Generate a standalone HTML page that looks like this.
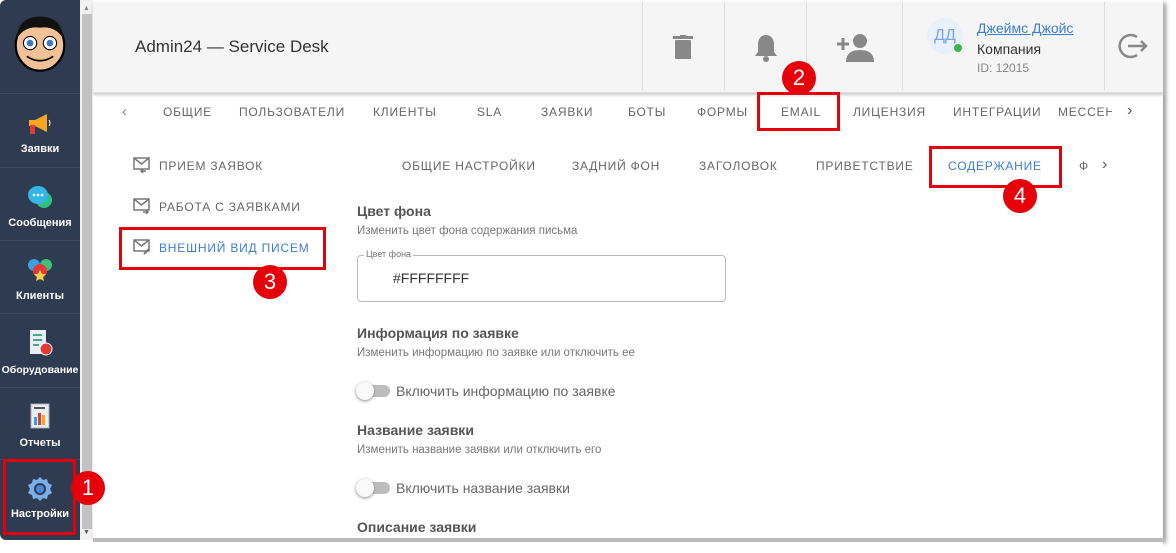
<!DOCTYPE html>
<html><head><meta charset="utf-8"><style>
*{box-sizing:border-box;margin:0;padding:0}
body{width:1176px;height:553px;background:#fff;font-family:"Liberation Sans",sans-serif;position:relative;overflow:hidden}
.abs{position:absolute}
#side{left:0;top:0;width:80px;height:540px;background:#2e3b51;border-radius:6px 0 0 6px}
.nav{position:absolute;left:0;width:80px;color:#fff;font-size:11px;font-weight:bold;text-align:center;border-top:1px solid #3d4a60}
.nav .ic{margin:0 auto;width:26px;height:26px}
#sb{left:80px;top:0;width:13px;height:540px;background:#f1f1f1}
#sbt{left:82px;top:14px;width:10px;height:515px;background:#c2c2c2}
#main{left:93px;top:0;width:1070px;height:540px;background:#fff;box-shadow:3px 3px 4px #999}
#hdr{left:93px;top:2px;width:1070px;height:91px;background:#f5f5f5;border-bottom:1px solid #ddd;box-shadow:0 2px 3px #ccc}
.tab{position:absolute;font-size:12px;letter-spacing:0.8px;color:#666;font-weight:500;white-space:nowrap}
.blue{color:#3b7ed1}
.red{position:absolute;border:3px solid #e5000a}
.badge{position:absolute;width:34px;height:34px;border-radius:50%;background:#e5000a;color:#fff;font-size:22px;text-align:center;line-height:34px}
.vs{position:absolute;top:2px;width:1px;height:88px;background:#ddd}
.h{position:absolute;left:357px;font-size:14px;font-weight:bold;color:#555}
.s{position:absolute;left:357px;font-size:11.5px;color:#777}
.tog{position:absolute;left:358px;width:32px;height:12px;border-radius:6px;background:#bdbdbd}
.tog:before{content:"";position:absolute;left:-2px;top:-3px;width:18px;height:18px;border-radius:50%;background:#fafafa;box-shadow:0 1px 3px #888}
.tl{position:absolute;left:396px;font-size:14px;color:#666}
</style></head><body>
<div id="side" class="abs">
 <div class="abs" style="left:10px;top:10px;width:60px;height:64px">
  <svg width="60" height="64" viewBox="0 0 52 58"><ellipse cx="26" cy="32" rx="22" ry="23" fill="#f2c196" stroke="#000" stroke-width="2"/><path d="M5 26 Q6 6 26 6 Q46 6 47 26 Q40 14 26 16 Q12 14 5 26Z" fill="#111"/><circle cx="17" cy="30" r="6" fill="#fff" stroke="#000"/><circle cx="35" cy="30" r="6" fill="#fff" stroke="#000"/><circle cx="17" cy="30" r="3" fill="#3a78c9"/><circle cx="35" cy="30" r="3" fill="#3a78c9"/><path d="M14 42 Q26 50 38 42" fill="none" stroke="#000" stroke-width="1.5"/></svg>
 </div>
 <div class="nav" style="top:93px;height:74px;padding-top:17px"><div class="ic"><svg width="26" height="26"><path d="M2 9h6l12-6v18l-12-6H2z" fill="#f6a623"/><rect x="3" y="14" width="5" height="9" fill="#e53935"/><path d="M22 9q2 3 0 6" stroke="#fff" fill="none"/></svg></div><div style="margin-top:6px">Заявки</div></div>
 <div class="nav" style="top:167px;height:73px;padding-top:16px"><div class="ic"><svg width="26" height="26"><circle cx="17" cy="16" r="8" fill="#2ec27e"/><ellipse cx="11" cy="11" rx="10" ry="9" fill="#34b6e8"/><circle cx="7" cy="11" r="1.3" fill="#fff"/><circle cx="11" cy="11" r="1.3" fill="#fff"/><circle cx="15" cy="11" r="1.3" fill="#fff"/></svg></div><div style="margin-top:7px">Сообщения</div></div>
 <div class="nav" style="top:240px;height:73px;padding-top:16px"><div class="ic"><svg width="26" height="26"><circle cx="7" cy="8" r="6" fill="#3aa0e0"/><circle cx="19" cy="8" r="6" fill="#3cc27a"/><circle cx="13" cy="14" r="7" fill="#e53935"/><path d="M13 13l2 4 4 0-3 3 1 4-4-2-4 2 1-4-3-3 4 0z" fill="#fbd34b"/></svg></div><div style="margin-top:7px">Клиенты</div></div>
 <div class="nav" style="top:313px;height:74px;padding-top:15px"><div class="ic"><svg width="26" height="28"><rect x="3" y="1" width="16" height="24" fill="#e8eef4"/><path d="M6 6h9M6 11h9M6 16h6" stroke="#4a8" stroke-width="2"/><circle cx="19" cy="20" r="6" fill="#e53935" stroke="#fff"/></svg></div><div style="margin-top:9px;font-size:10.5px">Оборудование</div></div>
 <div class="nav" style="top:387px;height:72px;padding-top:15px"><div class="ic"><svg width="26" height="28"><rect x="4" y="1" width="18" height="24" fill="#e8eef4" stroke="#aab"/><rect x="7" y="14" width="3" height="8" fill="#3aa0e0"/><rect x="11" y="10" width="3" height="12" fill="#e53935"/><rect x="15" y="12" width="3" height="10" fill="#f6a623"/><path d="M7 5h11" stroke="#555" stroke-width="2"/></svg></div><div style="margin-top:8px">Отчеты</div></div>
 <div class="nav" style="top:459px;height:81px;padding-top:16px"><div class="ic"><svg width="26" height="26" viewBox="0 0 26 26"><path d="M13 1l3 3 4-1 1 4 4 2-2 4 2 4-4 2-1 4-4-1-3 3-3-3-4 1-1-4-4-2 2-4-2-4 4-2 1-4 4 1z" fill="#7ab0ea"/><circle cx="13" cy="13" r="6" fill="#2e3b51"/><circle cx="13" cy="13" r="4" fill="#4a88d6"/></svg></div><div style="margin-top:6px">Настройки</div></div>
</div>
<div id="sb" class="abs"></div><div id="sbt" class="abs"></div>
<div class="abs" style="left:83px;top:5px;font-size:7px;color:#888">▲</div>
<div class="abs" style="left:83px;top:529px;font-size:7px;color:#555">▼</div>
<div id="main" class="abs"></div>
<div id="hdr" class="abs"></div>
<div class="abs" style="left:135px;top:37px;font-size:17px;color:#333">Admin24 — Service Desk</div>
<div class="vs" style="left:642px"></div><div class="vs" style="left:724px"></div><div class="vs" style="left:806px"></div><div class="vs" style="left:902px"></div><div class="vs" style="left:1104px"></div>
<svg class="abs" style="left:673px;top:35px" width="20" height="24"><rect x="2" y="5" width="16" height="19" rx="1" fill="#888"/><rect x="0" y="1" width="20" height="3" fill="#888"/><rect x="7" y="0" width="6" height="2" fill="#888"/></svg>
<svg class="abs" style="left:753px;top:33px" width="26" height="30"><path d="M13 2c-5 0-8 4-8 9v8l-3 4h22l-3-4v-8c0-5-3-9-8-9z" fill="#888"/><circle cx="13" cy="26" r="3" fill="#888"/></svg>
<svg class="abs" style="left:834px;top:32px" width="40" height="30"><path d="M3 12h12M9 6v12" stroke="#888" stroke-width="3"/><circle cx="26" cy="9" r="7" fill="#888"/><path d="M12 30q0-12 14-12t14 12z" fill="#888"/></svg>
<div class="abs" style="left:927px;top:18px;width:36px;height:36px;border-radius:50%;background:#e8f0fc;color:#7aa4e0;font-size:16px;text-align:center;line-height:36px">ДД</div>
<div class="abs" style="left:954px;top:44px;width:8px;height:8px;border-radius:50%;background:#3cb54a"></div>
<div class="abs" style="left:977px;top:20px;font-size:14px;color:#3b7ed1;text-decoration:underline">Джеймс Джойс</div>
<div class="abs" style="left:977px;top:41px;font-size:14px;color:#333">Компания</div>
<div class="abs" style="left:977px;top:61px;font-size:12px;color:#888">ID: 12015</div>
<svg class="abs" style="left:1117px;top:30px" width="32" height="32"><path d="M20 7A11 11 0 1 0 20 25" fill="none" stroke="#888" stroke-width="2.5"/><path d="M11 16h18M24 11l5 5-5 5" fill="none" stroke="#888" stroke-width="2.5"/></svg>
<div class="tab" style="left:122px;top:103px;font-size:15px;color:#888">‹</div>
<div class="tab" style="left:163px;top:105px">ОБЩИЕ</div>
<div class="tab" style="left:239px;top:105px">ПОЛЬЗОВАТЕЛИ</div>
<div class="tab" style="left:373px;top:105px">КЛИЕНТЫ</div>
<div class="tab" style="left:477px;top:105px">SLA</div>
<div class="tab" style="left:541px;top:105px">ЗАЯВКИ</div>
<div class="tab" style="left:628px;top:105px">БОТЫ</div>
<div class="tab" style="left:697px;top:105px">ФОРМЫ</div>
<div class="tab" style="left:781px;top:105px">EMAIL</div>
<div class="tab" style="left:853px;top:105px">ЛИЦЕНЗИЯ</div>
<div class="tab" style="left:953px;top:105px">ИНТЕГРАЦИИ</div>
<div class="tab" style="left:1058px;top:105px;width:54px;overflow:hidden">МЕССЕНДЖЕРЫ</div>
<div class="tab" style="left:1127px;top:102px;font-size:16px;color:#555">›</div>
<div class="tab" style="left:402px;top:159px">ОБЩИЕ НАСТРОЙКИ</div>
<div class="tab" style="left:572px;top:159px">ЗАДНИЙ ФОН</div>
<div class="tab" style="left:699px;top:159px">ЗАГОЛОВОК</div>
<div class="tab" style="left:816px;top:159px">ПРИВЕТСТВИЕ</div>
<div class="tab blue" style="left:948px;top:159px">СОДЕРЖАНИЕ</div>
<div class="tab" style="left:1079px;top:159px">Ф</div>
<div class="tab" style="left:1102px;top:156px;font-size:16px;color:#555">›</div>
<svg class="abs" style="left:133px;top:157px" width="18" height="16"><rect x="1" y="1" width="15" height="11" fill="none" stroke="#777" stroke-width="1.5"/><path d="M1 1l7.5 6 7.5-6" fill="none" stroke="#777" stroke-width="1.5"/><path d="M13 14h-5M10 12l-2 2 2 2" stroke="#777" fill="none" stroke-width="1.5"/></svg>
<div class="tab" style="left:159px;top:159px">ПРИЕМ ЗАЯВОК</div>
<svg class="abs" style="left:133px;top:198px" width="18" height="16"><rect x="1" y="1" width="15" height="11" fill="none" stroke="#777" stroke-width="1.5"/><path d="M1 1l7.5 6 7.5-6" fill="none" stroke="#777" stroke-width="1.5"/><path d="M10 14h5M13 12l2 2-2 2" stroke="#777" fill="none" stroke-width="1.5"/></svg>
<div class="tab" style="left:159px;top:200px">РАБОТА С ЗАЯВКАМИ</div>
<svg class="abs" style="left:133px;top:239px" width="18" height="16"><rect x="1" y="1" width="15" height="11" fill="none" stroke="#777" stroke-width="1.5"/><path d="M1 1l7.5 6 7.5-6" fill="none" stroke="#777" stroke-width="1.5"/><path d="M11 15l5-5" stroke="#777" stroke-width="2"/></svg>
<div class="tab blue" style="left:159px;top:241px">ВНЕШНИЙ ВИД ПИСЕМ</div>
<div class="h" style="top:203px">Цвет фона</div>
<div class="s" style="top:225px">Изменить цвет фона содержания письма</div>
<div class="abs" style="left:357px;top:255px;width:369px;height:47px;border:1px solid #bbb;border-radius:4px"></div>
<div class="abs" style="left:364px;top:249px;font-size:9px;color:#777;background:#fff;padding:0 2px">Цвет фона</div>
<div class="abs" style="left:393px;top:270px;font-size:14px;color:#333">#FFFFFFFF</div>
<div class="h" style="top:325px">Информация по заявке</div>
<div class="s" style="top:347px">Изменить информацию по заявке или отключить ее</div>
<div class="tog" style="top:385px"></div><div class="tl" style="top:383px">Включить информацию по заявке</div>
<div class="h" style="top:422px">Название заявки</div>
<div class="s" style="top:444px">Изменить название заявки или отключить его</div>
<div class="tog" style="top:482px"></div><div class="tl" style="top:480px">Включить название заявки</div>
<div class="h" style="top:519px">Описание заявки</div>
<div class="abs" style="left:93px;top:538px;width:1070px;height:15px;background:#fff"></div>
<div class="abs" style="left:93px;top:538px;width:1072px;height:4px;background:#bbb"></div>
<div class="red" style="left:3px;top:459px;width:73px;height:76px"></div>
<div class="badge" style="left:71px;top:471px">1</div>
<div class="red" style="left:757px;top:92px;width:83px;height:39px"></div>
<div class="badge" style="left:782px;top:61px">2</div>
<div class="red" style="left:119px;top:227px;width:207px;height:43px"></div>
<div class="badge" style="left:253px;top:265px">3</div>
<div class="red" style="left:929px;top:146px;width:133px;height:42px"></div>
<div class="badge" style="left:1003px;top:179px">4</div>
</body></html>
